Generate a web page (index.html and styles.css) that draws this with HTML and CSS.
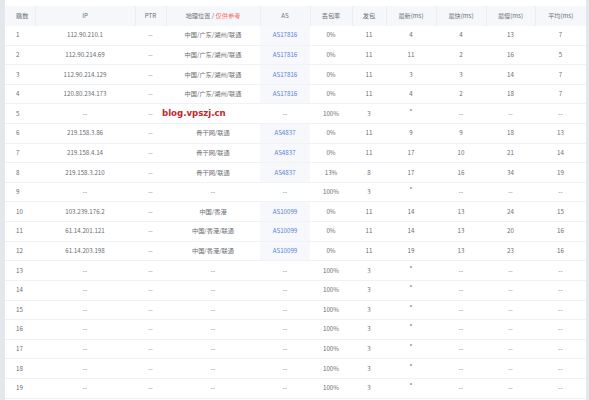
FILE: index.html
```html
<!DOCTYPE html>
<html lang="zh">
<head>
<meta charset="utf-8">
<link rel="stylesheet" href="styles.css">
</head>
<body>
<div class="card">
  <table class="trace">
    <colgroup>
      <col class="c-hop"><col class="c-ip"><col class="c-ptr"><col class="c-geo"><col class="c-as"><col class="c-loss"><col class="c-sent"><col class="c-last"><col class="c-best"><col class="c-worst"><col class="c-avg">
    </colgroup>
    <thead>
      <tr>
        <th class="hop">跳数</th><th>IP</th><th>PTR</th><th>地理位置 / <span class="ref">仅供参考</span></th><th>AS</th><th>丢包率</th><th>发包</th><th>最新(ms)</th><th>最快(ms)</th><th>最慢(ms)</th><th>平均(ms)</th>
      </tr>
    </thead>
    <tbody>
      <tr><td class="hop">1</td><td>112.90.210.1</td><td>--</td><td>中国/广东/湖州/联通</td><td class="as">AS17816</td><td>0%</td><td>11</td><td>4</td><td>4</td><td>13</td><td>7</td></tr>
      <tr><td class="hop">2</td><td>112.90.214.69</td><td>--</td><td>中国/广东/湖州/联通</td><td class="as">AS17816</td><td>0%</td><td>11</td><td>11</td><td>2</td><td>16</td><td>5</td></tr>
      <tr><td class="hop">3</td><td>112.90.214.129</td><td>--</td><td>中国/广东/湖州/联通</td><td class="as">AS17816</td><td>0%</td><td>11</td><td>3</td><td>3</td><td>14</td><td>7</td></tr>
      <tr><td class="hop">4</td><td>120.80.234.173</td><td>--</td><td>中国/广东/湖州/联通</td><td class="as">AS17816</td><td>0%</td><td>11</td><td>4</td><td>2</td><td>18</td><td>7</td></tr>
      <tr class="mark-row"><td class="hop">5</td><td>--</td><td>--</td><td>--</td><td>--</td><td>100%</td><td>3</td><td class="star">*</td><td>--</td><td>--</td><td>--</td></tr>
      <tr><td class="hop">6</td><td>219.158.3.86</td><td>--</td><td>骨干网/联通</td><td class="as">AS4837</td><td>0%</td><td>11</td><td>9</td><td>9</td><td>18</td><td>13</td></tr>
      <tr><td class="hop">7</td><td>219.158.4.14</td><td>--</td><td>骨干网/联通</td><td class="as">AS4837</td><td>0%</td><td>11</td><td>17</td><td>10</td><td>21</td><td>14</td></tr>
      <tr><td class="hop">8</td><td>219.158.3.210</td><td>--</td><td>骨干网/联通</td><td class="as">AS4837</td><td>13%</td><td>8</td><td>17</td><td>16</td><td>34</td><td>19</td></tr>
      <tr><td class="hop">9</td><td>--</td><td>--</td><td>--</td><td>--</td><td>100%</td><td>3</td><td class="star">*</td><td>--</td><td>--</td><td>--</td></tr>
      <tr><td class="hop">10</td><td>103.239.176.2</td><td>--</td><td>中国/香港</td><td class="as">AS10099</td><td>0%</td><td>11</td><td>14</td><td>13</td><td>24</td><td>15</td></tr>
      <tr><td class="hop">11</td><td>61.14.201.121</td><td>--</td><td>中国/香港/联通</td><td class="as">AS10099</td><td>0%</td><td>11</td><td>14</td><td>13</td><td>20</td><td>16</td></tr>
      <tr><td class="hop">12</td><td>61.14.203.198</td><td>--</td><td>中国/香港/联通</td><td class="as">AS10099</td><td>0%</td><td>11</td><td>19</td><td>13</td><td>23</td><td>16</td></tr>
      <tr><td class="hop">13</td><td>--</td><td>--</td><td>--</td><td>--</td><td>100%</td><td>3</td><td class="star">*</td><td>--</td><td>--</td><td>--</td></tr>
      <tr><td class="hop">14</td><td>--</td><td>--</td><td>--</td><td>--</td><td>100%</td><td>3</td><td class="star">*</td><td>--</td><td>--</td><td>--</td></tr>
      <tr><td class="hop">15</td><td>--</td><td>--</td><td>--</td><td>--</td><td>100%</td><td>3</td><td class="star">*</td><td>--</td><td>--</td><td>--</td></tr>
      <tr><td class="hop">16</td><td>--</td><td>--</td><td>--</td><td>--</td><td>100%</td><td>3</td><td class="star">*</td><td>--</td><td>--</td><td>--</td></tr>
      <tr><td class="hop">17</td><td>--</td><td>--</td><td>--</td><td>--</td><td>100%</td><td>3</td><td class="star">*</td><td>--</td><td>--</td><td>--</td></tr>
      <tr><td class="hop">18</td><td>--</td><td>--</td><td>--</td><td>--</td><td>100%</td><td>3</td><td class="star">*</td><td>--</td><td>--</td><td>--</td></tr>
      <tr><td class="hop">19</td><td>--</td><td>--</td><td>--</td><td>--</td><td>100%</td><td>3</td><td class="star">*</td><td>--</td><td>--</td><td>--</td></tr>
    </tbody>
  </table>
  <div class="watermark">blog.vpszj.cn</div>
</div>
</body>
</html>
```
FILE: styles.css
```css
html, body {
  margin: 0;
  padding: 0;
}
body {
  background: #e4e7ec;
  font-family: "Noto Sans CJK SC", "Noto Sans", sans-serif;
  width: 589px;
  height: 400px;
  overflow: hidden;
}
.card {
  position: relative;
  margin-left: 5px;
  width: 581px;
  height: 400px;
  background: #fff;
  padding-top: 6px;
  box-sizing: border-box;
}
.trace {
  width: 581px;
  border-collapse: collapse;
  table-layout: fixed;
  font-size: 6.2px;
  color: #6a6c70;
}
.c-hop { width: 30px; }
.c-ip { width: 100px; }
.c-ptr { width: 31px; }
.c-geo { width: 94px; }
.c-as { width: 50px; }
.c-loss { width: 42px; }
.c-sent { width: 34px; }
.c-last { width: 50px; }
.c-best { width: 50px; }
.c-worst { width: 49px; }
.c-avg { width: 51px; }

.trace th {
  background: #f5f7fa;
  color: #6e7074;
  font-weight: normal;
  height: 20px;
  padding: 0;
  text-align: center;
  border-right: 1px solid #eceef2;
  white-space: nowrap;
  line-height: 10px;
}
.trace th:last-child { border-right: none; }
.trace td {
  height: 18.62px;
  padding: 0;
  text-align: center;
  border-bottom: 1px solid #f0f2f5;
  white-space: nowrap;
  line-height: 10px;
}
.trace .hop {
  text-align: left;
  padding-left: 11px;
}
.ref { color: #f56c6c; }
.trace td.as {
  color: #5a7fd8;
  background: #f6f8fb;
}
.trace td.star {
  position: relative;
  top: -2px;
}
.watermark {
  position: absolute;
  left: 157px;
  top: 108px;
  font-family: "DejaVu Sans", "Noto Sans", sans-serif;
  font-weight: bold;
  font-size: 8.6px;
  color: #c0282d;
  line-height: 11px;
}
```
